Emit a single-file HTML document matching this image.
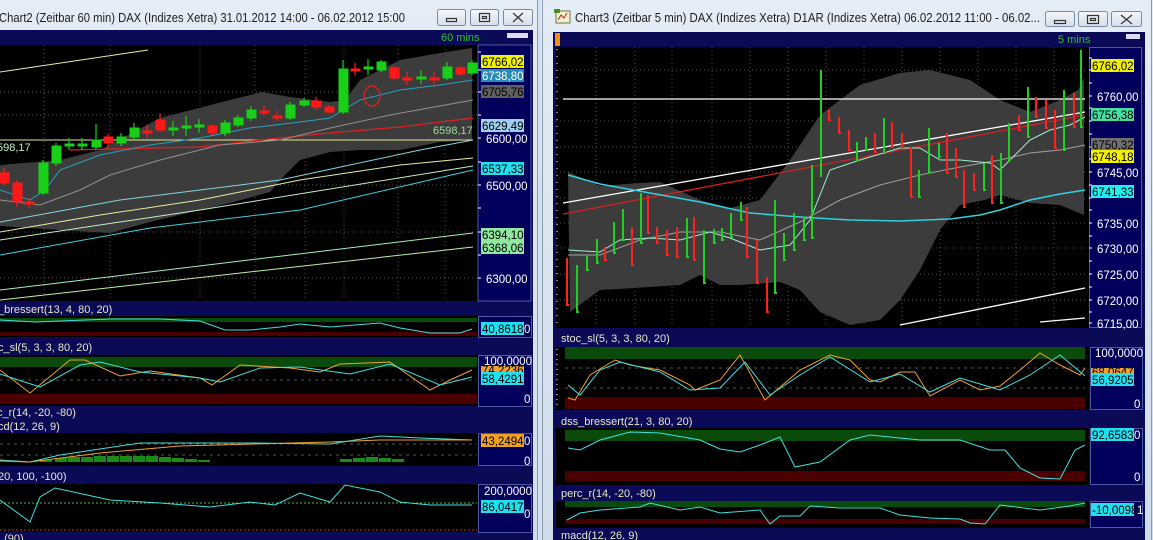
<!DOCTYPE html>
<html><head><meta charset="utf-8"><style>
html,body{margin:0;padding:0;background:#d4e0ee;overflow:hidden}
svg{display:block}
text{font-family:"Liberation Sans",sans-serif}
</style></head><body>
<svg width="1153" height="540" viewBox="0 0 1153 540" xmlns="http://www.w3.org/2000/svg">
<defs>
<linearGradient id="tb" x1="0" y1="0" x2="0" y2="1"><stop offset="0" stop-color="#e4ecf5"/><stop offset="1" stop-color="#cfdcea"/></linearGradient>
<linearGradient id="btn" x1="0" y1="0" x2="0" y2="1"><stop offset="0" stop-color="#f4f7fb"/><stop offset="1" stop-color="#d5deea"/></linearGradient>
</defs>
<rect x="0" y="0" width="1153" height="540" fill="#d4e0ee"/>
<rect x="0" y="0" width="537" height="540" fill="url(#tb)"/>
<rect x="541" y="0" width="612" height="540" fill="url(#tb)"/>
<line x1="537.5" y1="0" x2="537.5" y2="540" stroke="#8a9bb0"/>
<line x1="542.5" y1="0" x2="542.5" y2="540" stroke="#8a9bb0"/>
<line x1="1151.5" y1="0" x2="1151.5" y2="540" stroke="#8a9bb0"/>
<text x="-1" y="22" font-size="12.5" fill="#1e1e1e" textLength="406" lengthAdjust="spacingAndGlyphs">Chart2 (Zeitbar 60 min)  DAX (Indizes Xetra) 31.01.2012 14:00 - 06.02.2012 15:00</text>
<g stroke="#7b8ba0" fill="url(#btn)">
<rect x="437.5" y="9.5" width="28" height="16" rx="2"/><rect x="470.5" y="9.5" width="28" height="16" rx="2"/><rect x="503.5" y="9.5" width="29" height="16" rx="2"/>
<rect x="1045.5" y="11.5" width="29" height="15" rx="2"/><rect x="1078.5" y="11.5" width="29" height="15" rx="2"/><rect x="1111.5" y="11.5" width="30" height="15" rx="2"/>
</g>
<g stroke="#333" fill="none" stroke-width="1.2">
<rect x="446.5" y="18.5" width="10" height="3"/><rect x="479.5" y="13.5" width="10" height="8"/><rect x="482.5" y="16.5" width="4" height="2"/>
<path d="M513 13l10 9M523 13l-10 9"/>
<rect x="1054.5" y="20.5" width="11" height="3"/><rect x="1087.5" y="15.5" width="11" height="8"/><rect x="1090.5" y="18.5" width="5" height="2"/>
<path d="M1121 15l11 9M1132 15l-11 9"/>
</g>
<g><rect x="556" y="11" width="14" height="12" fill="#f4f0d0" stroke="#6a7a3a"/><path d="M558 20l3-5 3 3 3-5" stroke="#c02020" fill="none"/><rect x="554" y="9" width="6" height="4" fill="#4a8a2a"/></g>
<text x="575" y="22" font-size="12.5" fill="#1e1e1e" textLength="465" lengthAdjust="spacingAndGlyphs">Chart3 (Zeitbar 5 min)  DAX (Indizes Xetra) D1AR (Indizes Xetra) 06.02.2012 11:00 - 06.02...</text>

<rect x="0" y="30" width="533" height="510" fill="#0a0a56"/>
<rect x="0" y="45" width="478" height="256" fill="#000"/>
<rect x="478" y="45" width="53" height="256" fill="#00005c" stroke="#4a5aa0"/>
<rect x="507" y="33" width="21" height="5" fill="#dde"/>
<text x="441" y="41" font-size="11" fill="#2ec02e">60 mins</text>
<g stroke="#555" stroke-dasharray="1,3">
<line x1="44" y1="45" x2="44" y2="300"/><line x1="110" y1="45" x2="110" y2="300"/><line x1="200" y1="45" x2="200" y2="300"/><line x1="255" y1="45" x2="255" y2="300"/><line x1="305" y1="45" x2="305" y2="300"/><line x1="344" y1="45" x2="344" y2="300"/><line x1="398" y1="45" x2="398" y2="300"/><line x1="445" y1="45" x2="445" y2="300"/>
<line x1="0" y1="92" x2="478" y2="92"/><line x1="0" y1="115" x2="478" y2="115"/><line x1="0" y1="185" x2="478" y2="185"/><line x1="0" y1="232" x2="478" y2="232"/><line x1="0" y1="278" x2="478" y2="278"/>
</g>
<path d="M0 165 L60 160 L100 150 L160 118 L230 100 L262 92 L290 97 L330 102 L345 100 L360 80 L400 60 L440 53 L472 48 L472 140 L440 142 L400 150 L360 150 L330 152 L300 160 L285 175 L270 192 L230 203 L150 222 L110 233 L60 230 L0 226 Z" fill="#3c3c3c"/>
<g fill="none" stroke-width="1">
<path d="M0 72 L148 50" stroke="#e8f0a0"/>
<path d="M0 140 L473 140" stroke="#e8e890"/>
<path d="M70 150 L200 147 L260 140 L330 133 L400 127 L473 118" stroke="#e02020" stroke-width="1.3"/>
<path d="M0 200 L40 205 L80 190 L110 175 L160 160 L220 145 L280 140 L330 128 L390 115 L473 100" stroke="#909090"/>
<path d="M0 190 L30 200 L45 190 L60 170 L100 155 L150 145 L200 138 L250 128 L300 122 L330 118 L360 100 L400 90 L440 85 L473 80" stroke="#2aa0c0"/>
<path d="M0 232 L100 215 L200 200 L300 180 L400 165 L473 158" stroke="#e0f0a0"/>
<path d="M0 222 L120 200 L280 180 L420 150 L473 140" stroke="#80d8e0"/>
<path d="M0 255 L150 228 L300 210 L473 170" stroke="#40d0e0"/>
<path d="M0 240 L200 210 L473 166" stroke="#c0f0c0"/>
<path d="M0 290 L473 233" stroke="#a0f0c0"/>
<path d="M0 300 L473 247" stroke="#c0f0a0"/>
</g>
<text x="433" y="134" font-size="11" fill="#a0d8a0">6598,17</text>
<text x="-3" y="151" font-size="11" fill="#c0f0c0">598,17</text>
<ellipse cx="372" cy="96" rx="8" ry="10" fill="none" stroke="#e02020" stroke-width="1.3"/>
<g stroke="#18d018" fill="#18d018">
<path d="M43 160V195M56 143V166M69 138V150M82 138V150M96 124V150M121 133V146M134 123V141M173 121V136M186 116V136M199 119V133M225 120V136M238 115V127M251 106V121M290 102V120M304 98V107M343 60V114M368 59V75M381 60V72M421 70V84M447 62V80M472 60V75" stroke-width="1.2"/>
<rect x="39" y="163" width="9" height="30"/><rect x="52" y="146" width="9" height="17"/><rect x="65" y="144" width="9" height="2"/><rect x="78" y="144" width="9" height="2"/><rect x="92" y="140" width="9" height="7"/><rect x="117" y="137" width="9" height="6"/><rect x="130" y="128" width="9" height="9"/><rect x="169" y="128" width="9" height="2"/><rect x="182" y="126" width="9" height="2"/><rect x="195" y="125" width="9" height="2"/><rect x="221" y="123" width="9" height="10"/><rect x="234" y="118" width="9" height="7"/><rect x="247" y="110" width="9" height="8"/><rect x="286" y="105" width="9" height="13"/><rect x="300" y="101" width="9" height="4"/><rect x="339" y="69" width="9" height="43"/><rect x="364" y="67" width="9" height="2"/><rect x="377" y="62" width="9" height="8"/><rect x="417" y="77" width="9" height="2"/><rect x="443" y="67" width="9" height="11"/><rect x="468" y="63" width="9" height="10"/>
</g>
<g stroke="#ff1818" fill="#ff1818">
<path d="M4 168V186M17 180V207M29 198V208M108 134V148M147 125V138M160 113V132M212 124V135M264 106V116M277 111V121M316 97V110M329 105V113M355 63V76M394 66V80M407 71V85M434 72V84M460 66V76" stroke-width="1.2"/>
<rect x="0" y="173" width="9" height="10"/><rect x="13" y="183" width="9" height="19"/><rect x="25" y="202" width="9" height="2"/><rect x="104" y="137" width="9" height="6"/><rect x="143" y="131" width="9" height="2"/><rect x="156" y="120" width="9" height="10"/><rect x="208" y="126" width="9" height="7"/><rect x="260" y="111" width="9" height="2"/><rect x="273" y="116" width="9" height="2"/><rect x="312" y="101" width="9" height="6"/><rect x="325" y="107" width="9" height="5"/><rect x="351" y="69" width="9" height="2"/><rect x="390" y="68" width="9" height="10"/><rect x="403" y="78" width="9" height="2"/><rect x="430" y="78" width="9" height="2"/><rect x="456" y="68" width="9" height="6"/>
</g>
<g stroke="#fff"><path d="M478 52h3M478 70h3M478 92h3M478 115h3M478 138h3M478 162h3M478 185h3M478 208h3M478 232h3M478 255h3M478 278h3"/></g>
<g font-size="11.5">
<rect x="481" y="55" width="43" height="13" fill="#f0f000"/><text x="482" y="66" fill="#000">6766,02</text>
<rect x="481" y="69" width="43" height="13" fill="#2a8ab8"/><text x="482" y="80" fill="#fff">6738,80</text>
<rect x="481" y="85" width="43" height="13" fill="#606060"/><text x="482" y="96" fill="#000">6705,76</text>
<rect x="481" y="119" width="43" height="13" fill="#a0d0f0"/><text x="482" y="130" fill="#000">6629,49</text>
<text x="486" y="143" fill="#fff">6600,00</text>
<rect x="481" y="162" width="43" height="13" fill="#20e0f0"/><text x="482" y="173" fill="#000">6537,33</text>
<text x="486" y="190" fill="#fff">6500,00</text>
<rect x="481" y="228" width="43" height="13" fill="#90e8a0"/><text x="482" y="239" fill="#000">6394,10</text>
<rect x="481" y="241" width="43" height="13" fill="#90e8a0"/><text x="482" y="252" fill="#000">6368,06</text>
<text x="486" y="283" fill="#fff">6300,00</text>
</g>
<g font-size="11" fill="#e8e8c8">
<text x="-2" y="313">_bressert(13, 4, 80, 20)</text>
<text x="-2" y="351">c_sl(5, 3, 3, 80, 20)</text>
<text x="-3" y="416">c_r(14, -20, -80)</text>
<text x="-2" y="430">cd(12, 26, 9)</text>
<text x="-2" y="480">20, 100, -100)</text>
<text x="-2" y="542">_(90)</text>
</g>
<rect x="0" y="316" width="478" height="21" fill="#000"/>
<rect x="0" y="318" width="477" height="4" fill="#0a4a0a"/><rect x="0" y="332" width="477" height="4" fill="#4a0000"/>
<rect x="478.5" y="316.5" width="53" height="21" fill="#00005c" stroke="#4a5aa0"/>
<path d="M0 320 L35 322 L110 319 L160 319 L200 321 L225 330 L250 330 L280 327 L300 324 L330 327 L380 323 L400 328 L430 333 L460 333 L472 329" fill="none" stroke="#40e0e0"/>
<rect x="481" y="322" width="43" height="13" fill="#20e0f0"/><text x="482" y="333" font-size="11.5" fill="#000">40,8618</text><text x="524" y="333" font-size="11.5" fill="#fff">0</text>
<rect x="0" y="355" width="478" height="51" fill="#000"/>
<rect x="0" y="357" width="477" height="10" fill="#0a4a0a"/><rect x="0" y="394" width="477" height="10" fill="#4a0000"/>
<line x1="0" y1="380" x2="477" y2="380" stroke="#555" stroke-dasharray="3,4"/>
<rect x="478.5" y="355.5" width="53" height="51" fill="#00005c" stroke="#4a5aa0"/>
<path d="M0 370 L30 393 L70 360 L85 360 L120 376 L150 371 L200 378 L212 385 L240 365 L290 368 L320 372 L340 364 L390 362 L430 390 L450 380 L472 370" fill="none" stroke="#f0a030"/>
<path d="M0 374 L40 387 L80 365 L100 362 L140 372 L200 378 L220 382 L260 368 L300 367 L350 374 L390 364 L440 385 L472 377" fill="none" stroke="#40e0e0"/>
<g font-size="11.5"><text x="484" y="365" fill="#fff">100,0000</text><rect x="481" y="366" width="43" height="8" fill="#f0a030"/><text x="482" y="374" fill="#000">74,2236</text><rect x="481" y="372" width="43" height="13" fill="#20e0f0"/><text x="482" y="383" fill="#000">58,4291</text><text x="524" y="403" fill="#fff">0</text></g>
<rect x="0" y="433" width="478" height="33" fill="#000"/>
<g stroke="#555" stroke-dasharray="3,4"><line x1="0" y1="444" x2="477" y2="444"/><line x1="0" y1="455" x2="477" y2="455"/></g>
<rect x="478.5" y="433.5" width="53" height="32" fill="#00005c" stroke="#4a5aa0"/>
<g fill="#1a8a1a"><rect x="40" y="460" width="12" height="2"/><rect x="55" y="458" width="12" height="4"/><rect x="68" y="457" width="12" height="5"/><rect x="81" y="457" width="12" height="5"/><rect x="94" y="456" width="12" height="6"/><rect x="107" y="456" width="12" height="6"/><rect x="120" y="456" width="12" height="6"/><rect x="133" y="456" width="12" height="6"/><rect x="146" y="456" width="12" height="6"/><rect x="159" y="457" width="12" height="5"/><rect x="172" y="458" width="12" height="4"/><rect x="185" y="459" width="12" height="3"/><rect x="198" y="460" width="12" height="2"/><rect x="340" y="459" width="12" height="3"/><rect x="353" y="458" width="12" height="4"/><rect x="366" y="457" width="12" height="5"/><rect x="379" y="458" width="12" height="4"/><rect x="392" y="459" width="12" height="3"/></g>
<path d="M0 460 L30 462 L60 455 L140 443 L250 443 L330 444 L380 436 L420 438 L472 440" fill="none" stroke="#40e0e0"/>
<path d="M0 461 L30 462 L100 453 L180 446 L330 442 L380 440 L472 440" fill="none" stroke="#f0a030"/>
<g font-size="11.5"><rect x="481" y="434" width="43" height="13" fill="#f0a020"/><text x="482" y="445" fill="#000">43,2494</text><text x="524" y="445" fill="#fff">0</text><text x="524" y="465" fill="#fff">0</text></g>
<rect x="0" y="484" width="478" height="48" fill="#000"/>
<line x1="0" y1="503" x2="477" y2="503" stroke="#40c040" stroke-dasharray="2,2"/>
<line x1="0" y1="530" x2="477" y2="530" stroke="#c03030" stroke-dasharray="2,2"/>
<rect x="478.5" y="484.5" width="53" height="48" fill="#00005c" stroke="#4a5aa0"/>
<path d="M0 500 L30 522 L40 497 L55 488 L110 500 L160 503 L210 507 L250 502 L275 505 L300 493 L330 502 L345 485 L380 492 L400 502 L430 505 L472 505" fill="none" stroke="#40e0e0"/>
<g font-size="11.5"><text x="484" y="495" fill="#fff">200,0000</text><rect x="481" y="500" width="43" height="13" fill="#20e0f0"/><text x="482" y="511" fill="#000">86,0417</text><text x="524" y="518" fill="#fff">0</text></g>

<rect x="553" y="32" width="592" height="508" fill="#0a0a56"/>
<rect x="555" y="33" width="5" height="13" fill="#f09010"/>
<rect x="556" y="47" width="533" height="281" fill="#000"/>
<rect x="1089.5" y="47.5" width="52" height="280" fill="#00005c" stroke="#4a5aa0"/>
<rect x="1126" y="34" width="14" height="5" fill="#dde"/>
<text x="1058" y="43" font-size="11" fill="#2ec02e">5 mins</text>
<g stroke="#555" stroke-dasharray="1,3">
<line x1="596" y1="47" x2="596" y2="325"/><line x1="635" y1="47" x2="635" y2="325"/><line x1="672" y1="47" x2="672" y2="325"/><line x1="712" y1="47" x2="712" y2="325"/><line x1="750" y1="47" x2="750" y2="325"/><line x1="788" y1="47" x2="788" y2="325"/><line x1="826" y1="47" x2="826" y2="325"/><line x1="864" y1="47" x2="864" y2="325"/><line x1="902" y1="47" x2="902" y2="325"/><line x1="940" y1="47" x2="940" y2="325"/><line x1="978" y1="47" x2="978" y2="325"/><line x1="1016" y1="47" x2="1016" y2="325"/><line x1="1054" y1="47" x2="1054" y2="325"/>
<line x1="556" y1="70" x2="1088" y2="70"/><line x1="556" y1="121" x2="1088" y2="121"/><line x1="556" y1="147" x2="1088" y2="147"/><line x1="556" y1="172" x2="1088" y2="172"/><line x1="556" y1="198" x2="1088" y2="198"/><line x1="556" y1="223" x2="1088" y2="223"/><line x1="556" y1="248" x2="1088" y2="248"/><line x1="556" y1="274" x2="1088" y2="274"/><line x1="556" y1="300" x2="1088" y2="300"/>
</g>
<path d="M557 49V325" stroke="#fff" stroke-dasharray="1,6"/>
<path d="M568 172 L600 186 L640 183 L660 182 L700 200 L730 208 L760 200 L790 160 L820 115 L860 85 L900 73 L930 70 L970 80 L1000 100 L1030 112 L1060 100 L1078 90 L1084 78 L1084 215 L1060 205 L1030 203 L1000 195 L985 200 L960 205 L940 230 L920 270 L900 300 L880 320 L850 325 L820 312 L800 290 L780 282 L740 285 L720 285 L700 275 L680 285 L650 287 L600 290 L570 312 Z" fill="#3c3c3c"/>
<g fill="none">
<path d="M563 99 H1085" stroke="#fff" stroke-width="1.3"/>
<path d="M563 203 L1085 112" stroke="#fff" stroke-width="1.3"/>
<path d="M563 214 L1085 115" stroke="#d02020" stroke-width="1.3"/>
<path d="M568 175 L600 184 L650 193 L700 202 L750 213 L800 217 L850 220 L900 221 L950 219 L980 215 L1000 210 L1030 200 L1060 194 L1085 190" stroke="#30d0e0" stroke-width="1.5"/>
<path d="M568 255 L600 255 L640 240 L680 232 L720 232 L760 240 L800 222 L840 200 L880 185 L920 175 L960 167 L1000 160 L1030 153 L1060 150 L1085 145" stroke="#a0a0a0"/>
<path d="M568 250 L600 252 L620 240 L650 238 L680 240 L710 232 L730 238 L760 250 L790 245 L810 220 L830 170 L860 160 L900 148 L920 148 L940 160 L960 160 L990 163 L1000 170 L1010 160 L1030 140 L1050 130 L1070 125 L1085 117" stroke="#a0f0d0"/>
<path d="M900 325 L1085 288" stroke="#fff" stroke-width="1.3"/>
<path d="M1040 322 L1085 318" stroke="#fff" stroke-width="1.3"/>
</g>
<g stroke-width="2" fill="none">
<path stroke="#20d020" d="M577 265V312h2M587 255V270h2M597 239V263h2M614 222V253h2M623 209V240h2M641 193V243h2M687 218V257h2M704 230V283h2M714 229V243h2M722 228V240h2M731 213V237h2M741 202V220h2M775 200V293h2M784 233V260h2M794 213V250h2M804 217V240h2M812 165V238h2M821 70V177M857 142V160h2M866 137V150h2M884 118V153h2M919 170V197h2M929 128V172h2M939 143V157h2M984 163V190h2M1001 153V203h2M1009 123V160h2M1028 87V137h2M1064 90V150h2M1081 50V127h2"/>
<path stroke="#ff2020" d="M567 258V305h2M605 247V260h2M632 227V265h2M648 195V233h2M657 227V243h2M667 230V255h2M677 227V257h2M694 217V260h2M747 207V257h2M757 240V283h2M767 277V312h2M829 110V120h2M839 117V133h2M849 130V150h2M875 133V152h2M892 122V147h2M902 133V147h2M911 147V197h2M947 133V173h2M956 148V177h2M964 170V207h2M974 173V190h2M992 155V203h2M1019 115V130h2M1036 97V117h2M1046 100V128h2M1055 110V148h2M1074 93V127h2"/>
</g>
<g stroke="#fff"><path d="M1089 58h3M1089 70h3M1089 83h3M1089 96h3M1089 108h3M1089 121h3M1089 134h3M1089 147h3M1089 159h3M1089 172h3M1089 185h3M1089 198h3M1089 210h3M1089 223h3M1089 236h3M1089 248h3M1089 261h3M1089 274h3M1089 287h3M1089 300h3M1089 312h3M1089 323h3"/></g>
<g font-size="11.5">
<rect x="1091" y="59" width="43" height="13" fill="#f0f000"/><text x="1092" y="70" fill="#000">6766,02</text>
<text x="1097" y="101" fill="#fff">6760,00</text>
<rect x="1091" y="108" width="43" height="13" fill="#40e0a0"/><text x="1092" y="119" fill="#000">6756,38</text>
<rect x="1091" y="138" width="43" height="13" fill="#707070"/><text x="1092" y="149" fill="#000">6750,32</text>
<rect x="1091" y="150" width="43" height="13" fill="#f0f000"/><text x="1092" y="161" fill="#000">6748,18</text>
<text x="1097" y="177" fill="#fff">6745,00</text>
<rect x="1091" y="185" width="43" height="13" fill="#20f0f0"/><text x="1092" y="196" fill="#000">6741,33</text>
<text x="1097" y="228" fill="#fff">6735,00</text>
<text x="1097" y="253" fill="#fff">6730,00</text>
<text x="1097" y="279" fill="#fff">6725,00</text>
<text x="1097" y="305" fill="#fff">6720,00</text>
<text x="1097" y="328" fill="#fff">6715,00</text>
</g>
<g font-size="11" fill="#e8e8c8">
<text x="561" y="342">stoc_sl(5, 3, 3, 80, 20)</text>
<text x="561" y="425">dss_bressert(21, 3, 80, 20)</text>
<text x="561" y="497">perc_r(14, -20, -80)</text>
<text x="561" y="539">macd(12, 26, 9)</text>
</g>
<rect x="556" y="347" width="533" height="63" fill="#000"/>
<rect x="565" y="347" width="520" height="12" fill="#0a4a0a"/><rect x="565" y="397" width="520" height="12" fill="#4a0000"/>
<g stroke="#555" stroke-dasharray="3,4"><line x1="565" y1="368" x2="1085" y2="368"/><line x1="565" y1="388" x2="1085" y2="388"/></g>
<path d="M557 349V409M557 430V484M557 501V527" stroke="#fff" stroke-dasharray="1,4"/>
<rect x="1090.5" y="347.5" width="52" height="62" fill="#00005c" stroke="#4a5aa0"/>
<path d="M568 398 L575 400 L590 375 L615 360 L630 365 L660 370 L690 385 L695 390 L720 380 L740 355 L765 400 L800 370 L830 355 L850 360 L870 380 L880 382 L900 372 L915 372 L930 396 L960 380 L980 390 L1000 386 L1020 370 L1040 353 L1060 365 L1080 375 L1085 368" fill="none" stroke="#f0a030"/>
<path d="M568 385 L580 395 L600 370 L620 362 L660 372 L690 390 L720 388 L745 362 L770 395 L800 375 L830 357 L870 382 L900 374 L930 392 L960 378 L1000 390 L1030 375 L1060 355 L1085 376" fill="none" stroke="#40e0e0"/>
<g font-size="11.5"><text x="1095" y="357" fill="#fff">100,0000</text><rect x="1091" y="368" width="43" height="8" fill="#f0a030"/><text x="1092" y="376" fill="#000">68,0647</text><rect x="1091" y="373" width="43" height="13" fill="#20e0f0"/><text x="1092" y="384" fill="#000">56,9205</text><text x="1134" y="408" fill="#fff">0</text></g>
<rect x="556" y="428" width="533" height="57" fill="#000"/>
<rect x="565" y="430" width="520" height="11" fill="#0a4a0a"/><rect x="565" y="471" width="520" height="10" fill="#4a0000"/>
<rect x="1090.5" y="428.5" width="52" height="56" fill="#00005c" stroke="#4a5aa0"/>
<path d="M568 448 L580 450 L600 440 L630 432 L660 433 L700 440 L720 449 L740 452 L760 445 L780 437 L795 467 L820 462 L850 440 L870 435 L920 440 L960 440 L990 450 L1005 450 L1020 468 L1040 478 L1060 479 L1075 450 L1085 445" fill="none" stroke="#40e0e0"/>
<g font-size="11.5"><rect x="1091" y="428" width="43" height="13" fill="#20e0f0"/><text x="1092" y="439" fill="#000">92,6583</text><text x="1134" y="439" fill="#fff">0</text><text x="1134" y="481" fill="#fff">0</text></g>
<rect x="556" y="501" width="533" height="27" fill="#000"/>
<rect x="565" y="501" width="520" height="6" fill="#0a4a0a"/><rect x="565" y="519" width="520" height="5" fill="#4a0000"/>
<rect x="1090.5" y="501.5" width="52" height="26" fill="#00005c" stroke="#4a5aa0"/>
<path d="M567 520 L580 513 L600 510 L640 507 L650 503 L680 510 L700 507 L720 513 L760 510 L770 524 L780 516 L800 516 L810 506 L840 508 L880 508 L900 515 L930 518 L960 519 L970 523 L985 524 L1000 505 L1040 510 L1070 506 L1085 503" fill="none" stroke="#40e0e0"/>
<g font-size="11.5"><rect x="1091" y="503" width="43" height="13" fill="#20e0f0"/><text x="1092" y="514" fill="#000">-10,0098</text><text x="1137" y="514" fill="#fff">1</text></g>
</svg>
</body></html>
